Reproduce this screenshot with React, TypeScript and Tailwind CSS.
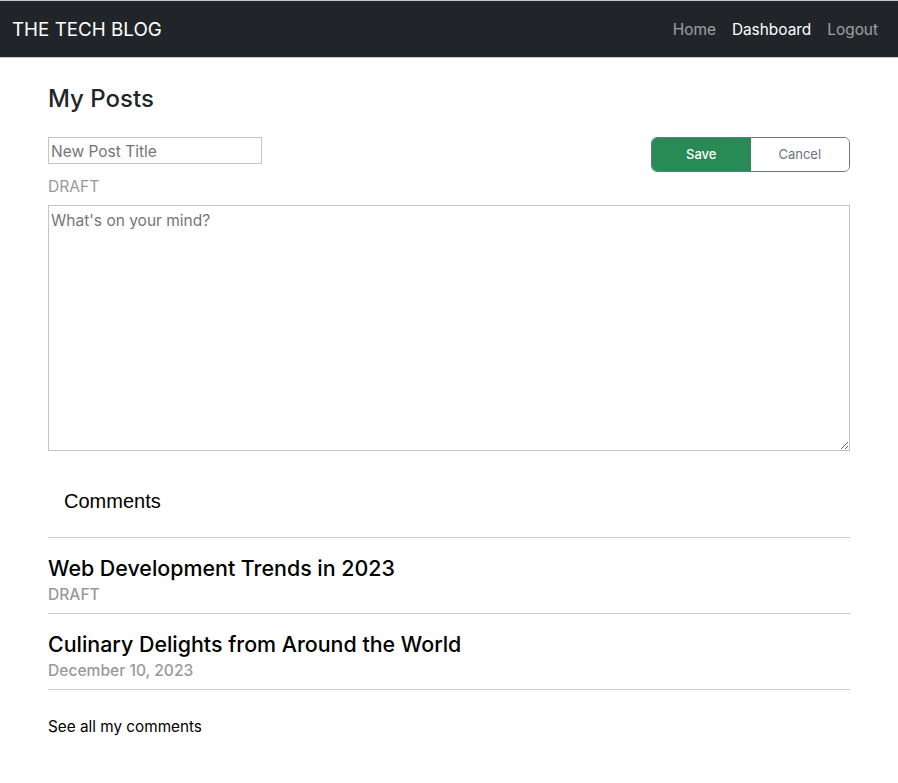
import React from 'react';

const POSTS = [
  { title: 'Web Development Trends in 2023', meta: 'DRAFT' },
  { title: 'Culinary Delights from Around the World', meta: 'December 10, 2023' },
];

const App: React.FC = () => {
  return (
    <div className="min-h-screen bg-white font-['Inter','Liberation_Sans',sans-serif] text-[#212529]">
      {/* Navbar */}
      <nav className="flex h-[58px] items-center justify-between border-y border-[#c8c8c8] bg-[#212529] pl-3 pr-5 pt-[2px]">
        <span className="text-[18.8px] text-white">THE TECH BLOG</span>
        <div className="flex items-center gap-4 text-[15.4px]">
          <a className="text-white/55">Home</a>
          <a className="text-white">Dashboard</a>
          <a className="text-white/55">Logout</a>
        </div>
      </nav>

      <main className="mx-12 pt-[26px]">
        <h2 className="text-[24px] font-medium leading-[30px]">My Posts</h2>

        {/* Editor */}
        <div className="mt-[23px] flex items-start justify-between">
          <input
            className="h-[27px] w-[214px] border border-[#c4c4c4] px-[2px] pt-[1px] text-[15.5px] outline-none placeholder:text-[#757575]"
            placeholder="New Post Title"
          />
          <div className="flex h-[35px] w-[199px] overflow-hidden rounded-[6px] border border-[#6c757d] text-[13px]">
            <button className="flex-1 bg-[#288a54] font-medium text-white">Save</button>
            <button className="flex-1 bg-white text-[#6c757d]">Cancel</button>
          </div>
        </div>
        <p className="mt-[3px] text-[15.6px] leading-[24px] text-[#999]">DRAFT</p>
        <textarea
          className="mt-[6px] block h-[246px] w-full border border-[#c4c4c4] px-[2px] py-[3px] text-[15.5px] outline-none placeholder:text-[#757575]"
          placeholder="What's on your mind?"
        />

        {/* Comments */}
        <h3 className="mt-[38px] px-4 pb-[24px] font-['Liberation_Sans',sans-serif] text-[20px] leading-[24px] text-black">
          Comments
        </h3>
        <ul className="border-t border-[#cccccc]">
          {POSTS.map((post) => (
            <li key={post.title} className="border-b border-[#cccccc] pb-[8px] pt-[16px]">
              <h4 className="text-[21.4px] font-medium leading-[28px] text-black">{post.title}</h4>
              <p className="mt-[2px] text-[15.6px] font-medium leading-[21px] text-[#999]">{post.meta}</p>
            </li>
          ))}
        </ul>
        <a className="mt-[26px] block text-[15.3px] text-black">See all my comments</a>
      </main>
    </div>
  );
};

export default App;
